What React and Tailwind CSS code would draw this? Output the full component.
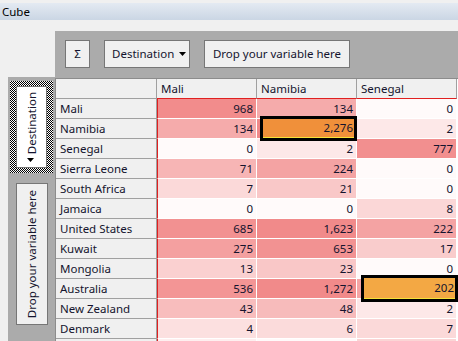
const rows = [
  ['Mali', 968, 134, 0],
  ['Namibia', 134, 2276, 2],
  ['Senegal', 0, 2, 777],
  ['Sierra Leone', 71, 224, 0],
  ['South Africa', 7, 21, 0],
  ['Jamaica', 0, 0, 8],
  ['United States', 685, 1623, 222],
  ['Kuwait', 275, 653, 17],
  ['Mongolia', 13, 23, 0],
  ['Australia', 536, 1272, 202],
  ['New Zealand', 43, 48, 2],
  ['Denmark', 4, 6, 7],
  ['', 1, 0, 9]
]

// highlighted cells: [row, col] -> box style
const marks = {
  '1-1': { cls: 'left-[3px] -right-[1px] -top-[3px] -bottom-[3px]', bg: 'bg-[#f0903a]' },
  '9-2': { cls: 'left-[4px] -right-[2px] -top-[4px] -bottom-[4px]', bg: 'bg-[#f3a844]' }
}

const heat = (v) => {
  const l = Math.log10(v + 1)
  const g = Math.max(138, Math.round(250 - 37 * l))
  const r = Math.max(240, Math.round(255 - 4.5 * l))
  return `rgb(${r},${g},${g})`
}

const fmt = (v) => v.toLocaleString('en-US')

const Checker = ({ children }) => (
  <div className="w-[43px] h-[92px] p-[5px] px-[6px] bg-[repeating-conic-gradient(#000_0_25%,#fff_0_50%)] bg-[length:2px_2px]">
    {children}
  </div>
)

export default function App() {
  return (
    <div className="w-[458px] h-[341px] overflow-hidden bg-[#f0f0f0] text-[11.5px] leading-none text-[#14142e] font-['Segoe_UI','Noto_Sans',sans-serif]">
      <div className="h-[20px] pt-[3px]">
        <div className="h-[17px] bg-gradient-to-b from-[#e4eaf2] to-[#cad6e4] pl-[2px] flex items-center text-black">
          Cube
        </div>
      </div>

      <div className="pt-[11px]">
        {/* toolbar */}
        <div className="ml-[55px] h-[46px] bg-[#ababab] pl-[10px] pt-[9px] flex items-start">
          <div className="w-[25px] h-[28px] border border-[#767676] bg-[#f0f0f0] flex items-center justify-center">
            Σ
          </div>
          <div className="ml-[14px] w-[86px] h-[28px] border border-[#767676] bg-[#f0f0f0] flex items-center pl-[7px] pr-[3px]">
            <span className="flex-1">Destination</span>
            <svg width="7" height="4" viewBox="0 0 7 4"><path d="M0 0h7L3.5 4z" fill="#000" /></svg>
          </div>
          <div className="ml-[14px] w-[146px] h-[28px] border border-[#767676] bg-[#f0f0f0] flex items-center justify-center">
            Drop your variable here
          </div>
        </div>

        <div className="flex ml-[8px]">
          {/* left axis panel */}
          <div className="w-[47px] h-[264px] bg-[#ababab] pl-[2px] pt-[4px]">
            <Checker>
              <div className="w-full h-full bg-white border border-[#767676] flex flex-col items-center justify-center gap-[4px]">
                <span className="[writing-mode:vertical-rl] rotate-180">Destination</span>
                <svg width="7" height="4" viewBox="0 0 7 4" className="-ml-[2px]"><path d="M0 0h7L3.5 4z" fill="#000" /></svg>
              </div>
            </Checker>
            <div className="mt-[10px] ml-[6px] w-[32px] h-[142px] bg-[#f0f0f0] border border-[#767676] flex items-center justify-center">
              <span className="[writing-mode:vertical-rl] rotate-180">Drop your variable here</span>
            </div>
          </div>

          {/* pivot grid */}
          <div className="flex-1 bg-[#ababab] h-[264px] pt-[1px]">
            <div className="grid grid-cols-[101px_100px_100px_100px] border-l border-t border-[#8c8c8c] bg-white">
              <div className="h-[20px] bg-[#f0f0f0] border-r border-b border-[#a0a0a0]" />
              {['Mali', 'Namibia', 'Senegal'].map((c) => (
                <div key={c} className="h-[20px] bg-[#f0f0f0] border-r border-[#a0a0a0] border-b border-b-[#e02020] pl-[4px] flex items-center">
                  {c}
                </div>
              ))}
              {rows.map((r, i) => (
                <div key={i} className="contents">
                  <div className="h-[20px] bg-[#f0f0f0] border-r border-b border-[#a0a0a0] pl-[4px] flex items-center">
                    {r[0]}
                  </div>
                  {r.slice(1).map((v, j) => {
                    const m = marks[`${i}-${j}`]
                    return (
                      <div
                        key={j}
                        style={{ backgroundColor: heat(v) }}
                        className={`relative h-[20px] border-r border-b border-white flex items-center justify-end pr-[3px] ${j === 0 ? 'border-l border-l-[#e02020]' : ''}`}
                      >
                        {m ? (
                          <div className={`absolute z-10 border-[3px] border-black ${m.cls}`}>
                            <div className={`w-full h-full ${m.bg} border-b border-[#f5e23a] flex items-center justify-end pr-[1px]`}>
                              {fmt(v)}
                            </div>
                          </div>
                        ) : (
                          r[0] ? fmt(v) : null
                        )}
                      </div>
                    )
                  })}
                </div>
              ))}
            </div>
          </div>
        </div>
      </div>
    </div>
  )
}
